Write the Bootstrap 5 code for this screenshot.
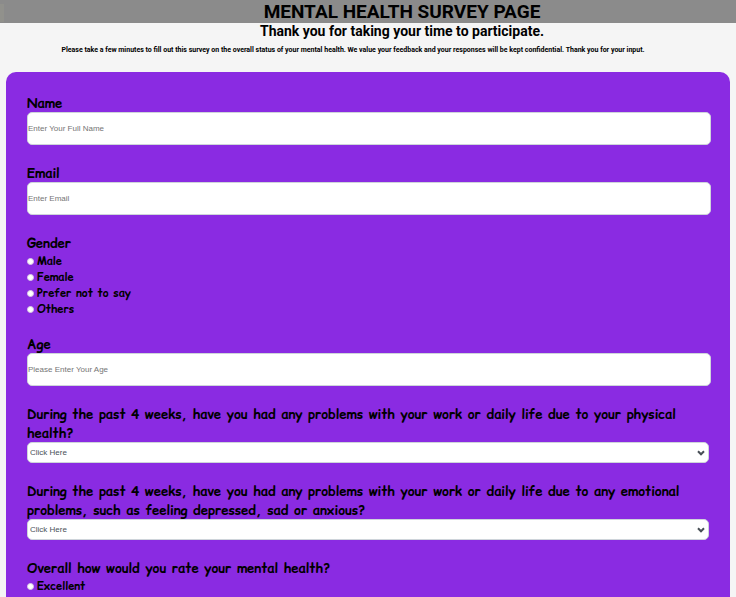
<!DOCTYPE html>
<html lang="en">
<head>
<meta charset="utf-8">
<meta name="viewport" content="width=device-width, initial-scale=1">
<title>Mental Health Survey Page</title>
<link href="https://cdn.jsdelivr.net/npm/bootstrap@5.3.0/dist/css/bootstrap.min.css" rel="stylesheet">
<style>
body { background: #f5f5f5; color: #000; font-family: Roboto, sans-serif; }
.banner { background: #8b8b8b; }
.logo-edge { width: 4px; height: 18px; margin-bottom: 1px; background: #91918c; }
.banner h1 { font-size: 19px; line-height: 23px; font-weight: 700; padding-left: 64px; }
.thanks { font-size: 14px; line-height: 17px; font-weight: 700; padding-left: 68px; }
.intro { font-size: 7px; line-height: 8px; font-weight: 700; padding-right: 30px; margin: 6px 0 18px; }
.survey { background: #8a2be2; border-radius: 10px; margin: 0 6px; padding: 22px 19px 21px 21px; font-family: "Comic Relief", "Comic Neue", "Comic Sans MS", cursive; font-weight: 700; }
.question { display: block; font-size: 13px; line-height: 19px; font-weight: 700; margin: 0; float: none; padding: 0; }
label.question { margin-bottom: -1px; }
.block { margin-bottom: 19px; }
fieldset.block { margin-bottom: 18px; }
.text-field, .pick-field { font-family: "Liberation Sans", Arial, sans-serif; font-size: 8px; line-height: 12px; border: 1px solid #ced4da; border-radius: 5px; background-color: #fff; }
.text-field { height: 33px; padding: 0; }
.text-field::placeholder { color: #757575; opacity: 1; }
.pick-field { height: 21px; padding: 0 14px 0 2px; color: #495057; appearance: none; background-image: url("data:image/svg+xml,%3Csvg xmlns='http://www.w3.org/2000/svg' viewBox='0 0 8 6'%3E%3Cpath d='M1 1.2 4 4.3 7 1.2' fill='none' stroke='%23495057' stroke-width='2'/%3E%3C/svg%3E"); background-repeat: no-repeat; background-position: right 3px center; background-size: 8px 6px; }
.pick-wrap { padding-right: 2px; }
.choice { font-size: 11px; line-height: 16px; gap: 3px; }
.choice input { width: 7px; height: 7px; margin: 0; flex: none; appearance: none; background: #fff; border: 1px solid #d8cbe4; border-radius: 50%; }
.choice input:checked { background: #495057; }
</style>
</head>
<body>
<header>
  <div class="banner d-flex align-items-end">
    <span class="logo-edge"></span>
    <h1 class="flex-grow-1 text-center m-0">MENTAL HEALTH SURVEY PAGE</h1>
  </div>
  <h2 class="thanks text-center m-0">Thank you for taking your time to participate.</h2>
  <p class="intro text-center">Please take a few minutes to fill out this survey on the overall status of your mental health. We value your feedback and your responses will be kept confidential. Thank you for your input.</p>
</header>
<main>
  <form class="survey">
    <div class="block"><label class="question" for="name">Name</label><input class="text-field d-block w-100" id="name" type="text" placeholder="Enter Your Full Name"></div>
    <div class="block"><label class="question" for="email">Email</label><input class="text-field d-block w-100" id="email" type="email" placeholder="Enter Email"></div>
    <fieldset class="block">
      <legend class="question">Gender</legend>
      <label class="choice d-flex align-items-center"><input type="radio" name="gender">Male</label>
      <label class="choice d-flex align-items-center"><input type="radio" name="gender">Female</label>
      <label class="choice d-flex align-items-center"><input type="radio" name="gender">Prefer not to say</label>
      <label class="choice d-flex align-items-center"><input type="radio" name="gender">Others</label>
    </fieldset>
    <div class="block"><label class="question" for="age">Age</label><input class="text-field d-block w-100" id="age" type="text" placeholder="Please Enter Your Age"></div>
    <div class="block pick-wrap"><label class="question" for="physical">During the past 4 weeks, have you had any problems with your work or daily life due to your physical health?</label><select class="pick-field d-block w-100" id="physical"><option>Click Here</option><option>Yes</option><option>No</option></select></div>
    <div class="block pick-wrap"><label class="question" for="emotional">During the past 4 weeks, have you had any problems with your work or daily life due to any emotional problems, such as feeling depressed, sad or anxious?</label><select class="pick-field d-block w-100" id="emotional"><option>Click Here</option><option>Yes</option><option>No</option></select></div>
    <fieldset>
      <legend class="question">Overall how would you rate your mental health?</legend>
      <label class="choice d-flex align-items-center"><input type="radio" name="rating">Excellent</label>
    </fieldset>
  </form>
</main>
<script src="https://cdn.jsdelivr.net/npm/bootstrap@5.3.0/dist/js/bootstrap.bundle.min.js"></script>
</body>
</html>
